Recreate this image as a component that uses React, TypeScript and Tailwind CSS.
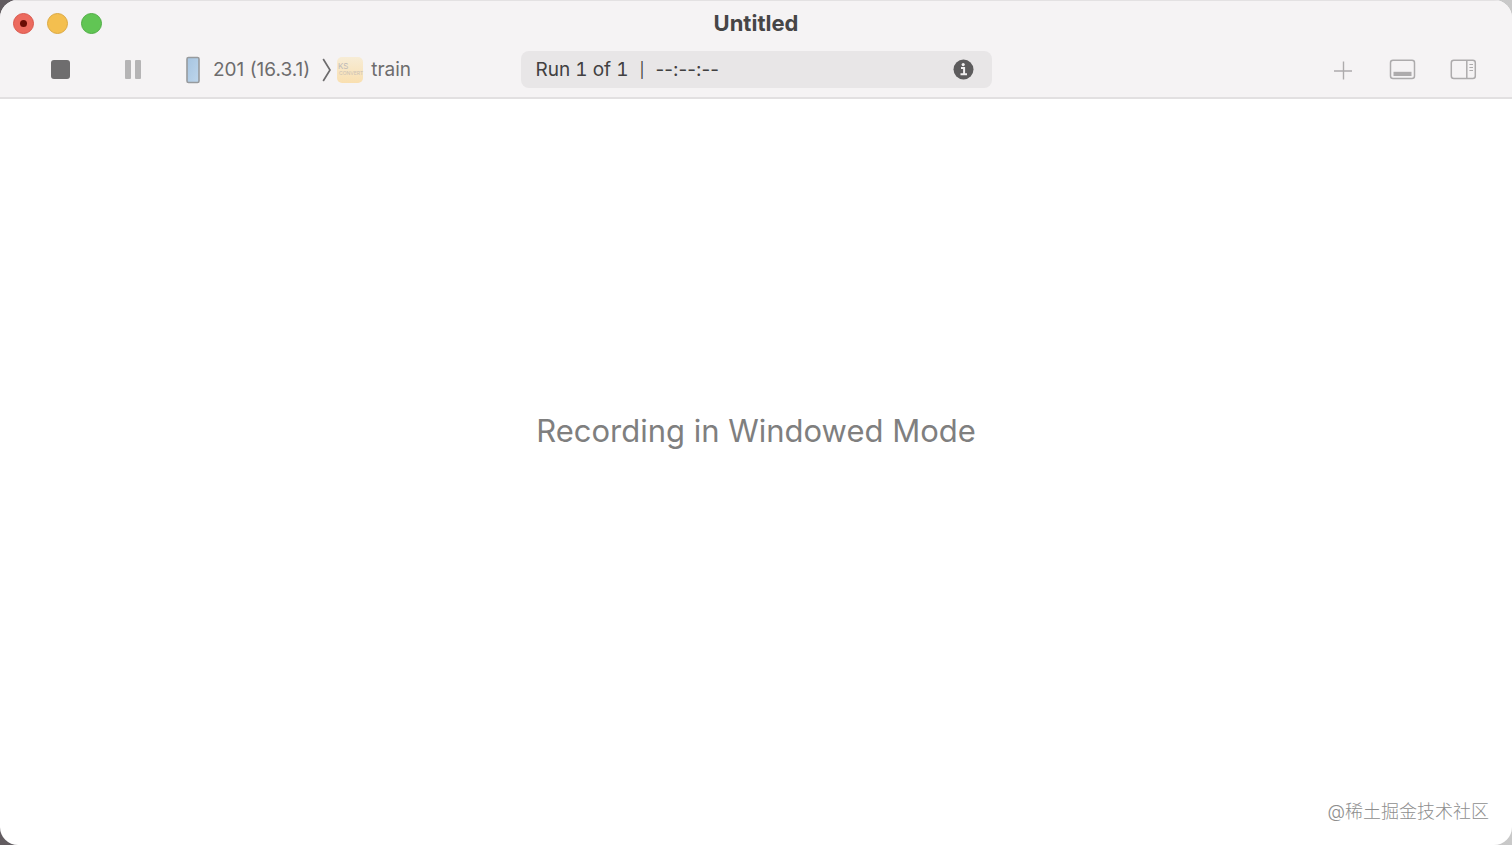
const trafficLights = [
  { label: "Close", color: "bg-[#ec6a5e] border-[#d8574c]", dot: true },
  { label: "Minimize", color: "bg-[#f4bf4f] border-[#dba842]", dot: false },
  { label: "Zoom", color: "bg-[#61c554] border-[#50ad45]", dot: false },
];

const TitleBar = () => (
  <div className="grid h-11 grid-cols-[1fr_auto_1fr] items-center px-[13px]">
    <div className="flex items-center gap-[13px]">
      {trafficLights.map((light) => (
        <button
          key={light.label}
          aria-label={light.label}
          className={`flex size-[21px] items-center justify-center rounded-full border ${light.color}`}
        >
          {light.dot && <span className="size-[7px] rounded-full bg-[#6b0d05]" />}
        </button>
      ))}
    </div>
    <h1 className="text-[22px] leading-6 font-bold text-[#464546]">Untitled</h1>
  </div>
);

const DeviceIcon = () => (
  <svg width="14" height="28" viewBox="0 0 14 28" aria-hidden="true">
    <defs>
      <linearGradient id="screen" x1="0" y1="0" x2="1" y2="1">
        <stop offset="0" stopColor="#a6c4e0" />
        <stop offset="1" stopColor="#bed6ec" />
      </linearGradient>
    </defs>
    <rect x="1" y="1.5" width="12" height="25" rx="1.5" fill="url(#screen)" stroke="#979a9d" strokeWidth="1.6" />
  </svg>
);

const TrainIcon = () => (
  <svg width="28" height="28" viewBox="0 0 28 28" aria-hidden="true">
    <defs>
      <linearGradient id="train" x1="0" y1="0" x2="0" y2="1">
        <stop offset="0" stopColor="#f7ecd6" />
        <stop offset="1" stopColor="#f9dfb0" />
      </linearGradient>
    </defs>
    <rect x="1" y="1" width="26" height="26" rx="5" fill="url(#train)" />
    <text x="2" y="13" fontSize="8" fill="#bdb9b8">KS</text>
    <text x="3" y="19" fontSize="5" fill="#c9c0b4">CONVERT</text>
  </svg>
);

const Toolbar = () => (
  <div className="grid h-[52px] grid-cols-[1fr_471px_1fr] items-start pt-[6px] text-[#6d6c6d]">
    <div className="flex h-[37px] items-center pl-[51px]">
      <button aria-label="Stop" className="size-[19px] rounded-[3px] bg-[#6e6d6e]" />
      <button aria-label="Pause" className="ml-[55px] flex h-[19px] gap-[4px]">
        <span className="h-full w-[6px] rounded-[1px] bg-[#b5b4b5]" />
        <span className="h-full w-[6px] rounded-[1px] bg-[#b5b4b5]" />
      </button>
      <button className="ml-[45px] flex items-center gap-[13px]">
        <DeviceIcon />
        <span className="text-[19px] leading-[26px] whitespace-nowrap">201 (16.3.1)</span>
      </button>
      <svg className="ml-[12px]" width="10" height="24" viewBox="0 0 10 24" fill="none" aria-hidden="true">
        <path d="M1.2 1L8 12L1.2 23" stroke="#6d6c6d" strokeWidth="1.7" />
      </svg>
      <button className="ml-[4px] flex items-center gap-[7px]">
        <TrainIcon />
        <span className="text-[19px] leading-[26px]">train</span>
      </button>
    </div>

    <div className="flex h-[37px] items-center justify-between rounded-lg bg-[#e8e6e7] pr-[18px] pl-[15px] text-[19px] leading-[26px] text-[#414041]">
      <div className="flex items-center gap-[11px]">
        <span className="tabular-nums">Run 1 of 1</span>
        <span className="text-[15px]">|</span>
        <span>--:--:--</span>
      </div>
      <button aria-label="Run information">
        <svg width="21" height="21" viewBox="0 0 21 21" aria-hidden="true">
          <circle cx="10.5" cy="10.5" r="10" fill="#5d5c5d" />
          <circle cx="10.2" cy="5.6" r="1.6" fill="#f1eff0" />
          <path d="M8 9H11.1V15.2M7.5 15.2H14" fill="none" stroke="#f1eff0" strokeWidth="2" />
        </svg>
      </button>
    </div>

    <div className="flex h-[37px] items-center justify-end pr-[35px]">
      <button aria-label="Add instrument">
        <svg width="20" height="20" viewBox="0 0 20 20" aria-hidden="true">
          <path d="M10.5 1.5V19.5M1 11H19" stroke="#adabac" strokeWidth="1.4" />
        </svg>
      </button>
      <button aria-label="Toggle detail area" className="ml-[36px]">
        <svg width="27" height="21" viewBox="0 0 27 21" fill="none" aria-hidden="true">
          <rect x="1.5" y="1.2" width="24" height="18.4" rx="2.5" stroke="#adabac" strokeWidth="1.5" />
          <rect x="4.5" y="12.8" width="18" height="4.2" fill="#adabac" />
        </svg>
      </button>
      <button aria-label="Toggle inspector" className="ml-[34px]">
        <svg width="27" height="21" viewBox="0 0 27 21" fill="none" stroke="#adabac" strokeWidth="1.5" aria-hidden="true">
          <rect x="1.3" y="1.2" width="24" height="18.4" rx="2.5" />
          <path d="M16.8 1.2V19.6" />
          <path d="M19.4 5.5H23M19.4 8.5H23M19.4 11.5H23" strokeWidth="1.1" />
        </svg>
      </button>
    </div>
  </div>
);

const App = () => {
  return (
    <div className="h-screen bg-linear-to-r from-[#625c60] to-[#c9c9c9] font-['Inter','Noto_Sans_CJK_SC',sans-serif]">
      <div className="flex h-full flex-col overflow-hidden rounded-[18px] bg-white">
        <header className="border-t border-b-2 border-t-[#e3e1e2] border-b-[#e2e0e1] bg-[#f5f3f4]">
          <TitleBar />
          <Toolbar />
        </header>
        <main className="flex flex-1 flex-col">
          <div className="flex flex-1 items-center justify-center pt-[10px]">
            <p className="text-[31px] leading-10 text-[#7f7f7f]">Recording in Windowed Mode</p>
          </div>
          <footer className="flex h-[92px] items-center justify-end pt-[26px] pr-[23px]">
            <span className="text-[18px] leading-6 font-light text-[#8e8e8e]">@稀土掘金技术社区</span>
          </footer>
        </main>
      </div>
    </div>
  );
};

export default App;
